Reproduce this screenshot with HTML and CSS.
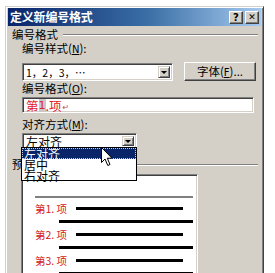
FILE: index.html
```html
<!DOCTYPE html>
<html>
<head>
<meta charset="utf-8">
<link rel="stylesheet" href="styles.css">
</head>
<body>
<div class="dialog">
  <div class="titlebar">
    <span class="title">定义新编号格式</span>
    <div class="tbtns">
      <span class="tbtn">?</span>
      <span class="tbtn x">✕</span>
    </div>
  </div>
  <div class="content">
    <div class="group"><span>编号格式</span><i class="gline"></i></div>
    <div class="label">编号样式(<u>N</u>):</div>
    <div class="row1">
      <div class="combo wide"><span class="ctext">1，2，3，⋯</span><span class="drop"><i class="tri"></i></span></div>
      <div class="button">字体(<u>F</u>)...</div>
    </div>
    <div class="label l2">编号格式(<u>O</u>):</div>
    <div class="input"><span class="red">第</span><span class="red sel">1</span><span class="red">.项</span><span class="ret">↵</span></div>
    <div class="label l3">对齐方式(<u>M</u>):</div>
    <div class="combo narrow"><span class="ctext">左对齐</span><span class="drop"><i class="tri"></i></span></div>
    <div class="group g2"><span>预览</span><i class="gline"></i></div>
    <div class="preview">
      <div class="pgrey"></div>
      <div class="item"><span class="num">第1. 项</span><i class="bar"></i></div>
      <div class="cont"><i class="bar2"></i></div>
      <div class="item"><span class="num">第2. 项</span><i class="bar"></i></div>
      <div class="cont"><i class="bar2"></i></div>
      <div class="item"><span class="num">第3. 项</span><i class="bar"></i></div>
      <div class="cont"><i class="bar2"></i></div>
    </div>
  </div>
  <div class="list">
    <div class="opt on">左对齐</div>
    <div class="opt">居中</div>
    <div class="opt">右对齐</div>
  </div>
  <svg class="cursor" width="13" height="20" viewBox="0 0 13 20">
    <path d="M0.5 0.5 L0.5 15.5 L4 12 L6.8 18.5 L9 17.5 L6.3 11.2 L11 11.2 Z" fill="#fff" stroke="#000" stroke-width="1"/>
  </svg>
</div>
</body>
</html>
```

FILE: styles.css
```css
html, body {
  margin: 0;
  padding: 0;
  background: #fff;
  overflow: hidden;
}
body {
  width: 275px;
  height: 273px;
  font-family: "Noto Sans CJK SC", "DejaVu Sans", sans-serif;
  font-size: 12px;
  color: #000;
}
.dialog {
  position: relative;
  margin: 6px 0 0 5px;
  width: 253px;
  height: 290px;
  background: #d4d0c8;
  border-style: solid;
  border-width: 1px;
  border-color: #d4d0c8 #404040 #404040 #d4d0c8;
  box-shadow: inset 1px 1px 0 #fff, inset -1px -1px 0 #808080;
  padding: 1px 2px 0 2px;
}
.titlebar {
  height: 18px;
  background: linear-gradient(to right, #0a246a 0%, #3a6ea5 55%, #a6caf0 100%);
  display: flex;
  align-items: center;
  justify-content: space-between;
  padding: 0 2px 0 2px;
}
.title {
  color: #fff;
  font-weight: bold;
  font-size: 12px;
  line-height: 14px;
  letter-spacing: -0.2px;
}
.tbtns {
  display: flex;
  gap: 2px;
}
.tbtn {
  width: 12px;
  height: 11px;
  background: #d4d0c8;
  border: 1px solid;
  border-color: #fff #404040 #404040 #fff;
  box-shadow: inset -1px -1px 0 #808080;
  font-family: "DejaVu Sans", sans-serif;
  font-weight: bold;
  font-size: 10px;
  line-height: 11px;
  text-align: center;
}
.tbtn.x {
  font-size: 9px;
}
.content {
  padding-left: 4px;
}
.group {
  margin-top: 2px;
  height: 13px;
  line-height: 13px;
  display: flex;
  align-items: center;
  font-size: 11.5px;
}
.gline {
  flex: 1;
  height: 0;
  border-top: 1px solid #808080;
  border-bottom: 1px solid #fff;
  margin: 0 3px 0 5px;
}
.label {
  margin-left: 10px;
  height: 13px;
  line-height: 13px;
  margin-top: 1px;
  font-size: 11.5px;
}
.label u {
  font-family: "DejaVu Sans", sans-serif;
  font-size: 10px;
}
.row1 {
  margin-top: 7px;
  margin-left: 10px;
  display: flex;
  align-items: flex-start;
  gap: 11px;
  height: 19px;
}
.combo {
  position: relative;
  background: #fff;
  border: 1px solid;
  border-color: #808080 #fff #fff #808080;
  box-shadow: inset 1px 1px 0 #404040, inset -1px -1px 0 #d4d0c8;
  display: flex;
  align-items: center;
  box-sizing: border-box;
}
.combo.wide {
  margin-top: 1px;
  width: 151px;
  height: 18px;
}
.combo.narrow {
  margin-top: 2px;
  margin-left: 10px;
  width: 115px;
  height: 16px;
}
.ctext {
  padding-left: 3px;
  flex: 1;
  font-size: 12px;
  line-height: 13px;
  white-space: nowrap;
}
.combo.wide .ctext {
  font-size: 10.5px;
}
.drop {
  width: 10px;
  align-self: stretch;
  margin: 2px 2px 2px 0;
  background: #d4d0c8;
  border: 1px solid;
  border-color: #d4d0c8 #404040 #404040 #d4d0c8;
  box-shadow: inset 1px 1px 0 #fff, inset -1px -1px 0 #808080;
  display: flex;
  align-items: center;
  justify-content: center;
}
.tri {
  width: 0;
  height: 0;
  border-left: 3px solid transparent;
  border-right: 3px solid transparent;
  border-top: 3px solid #000;
}
.button {
  width: 70px;
  height: 17px;
  border: 1px solid;
  border-color: #fff #404040 #404040 #fff;
  box-shadow: inset -1px -1px 0 #808080;
  text-align: center;
  line-height: 17px;
  font-size: 11.5px;
}
.button u {
  font-family: "DejaVu Sans", sans-serif;
  font-size: 10px;
}
.l2 {
  margin-top: 1px;
}
.input {
  margin: 2px 0 0 10px;
  width: 232px;
  height: 16px;
  box-sizing: border-box;
  background: #fff;
  border: 1px solid;
  border-color: #808080 #fff #fff #808080;
  box-shadow: inset 1px 1px 0 #404040, inset -1px -1px 0 #d4d0c8;
  display: flex;
  align-items: center;
  padding-left: 3px;
  font-size: 12.5px;
  line-height: 13px;
}
.red {
  color: #e0202a;
}
.sel {
  background: #c8c8c8;
  font-family: "DejaVu Sans", sans-serif;
  font-size: 11px;
}
.ret {
  color: #c05050;
  font-size: 8px;
  margin-left: 1px;
  margin-top: 3px;
}
.l3 {
  margin-top: 5px;
}
.g2 {
  margin-top: 9px;
}
.preview {
  margin: 3px 0 0 9px;
  width: 177px;
  height: 120px;
  background: #fff;
  border: 1px solid;
  border-color: #808080 #fff #fff #808080;
  box-shadow: inset 1px 1px 0 #404040, inset -1px -1px 0 #d4d0c8;
  padding: 0 4px 0 13px;
  box-sizing: border-box;
}
.pgrey {
  margin-top: 21px;
  height: 2px;
  background: #808080;
}
.item {
  margin-top: 4px;
  height: 13px;
  display: flex;
  align-items: center;
}
.item + .cont + .item {
  margin-top: 0;
}
.num {
  color: #d42020;
  font-size: 10.5px;
  line-height: 13px;
  width: 41px;
  white-space: nowrap;
}
.bar {
  width: 107px;
  height: 3px;
  background: #000;
}
.cont {
  height: 13px;
  display: flex;
  align-items: center;
  justify-content: flex-end;
}
.bar2 {
  width: 134px;
  height: 3px;
  background: #000;
}
.list {
  position: absolute;
  left: 15px;
  top: 140px;
  width: 114px;
  height: 32px;
  background: #fff;
  border: 1px solid #000;
  font-size: 12px;
  line-height: 11px;
}
.opt {
  height: 11px;
  padding-left: 2px;
}
.opt.on {
  background: #0a246a;
  color: #fff;
  outline: 1px dotted #d4d0c8;
  outline-offset: -1px;
}
.cursor {
  position: absolute;
  left: 95px;
  top: 140px;
}
```
